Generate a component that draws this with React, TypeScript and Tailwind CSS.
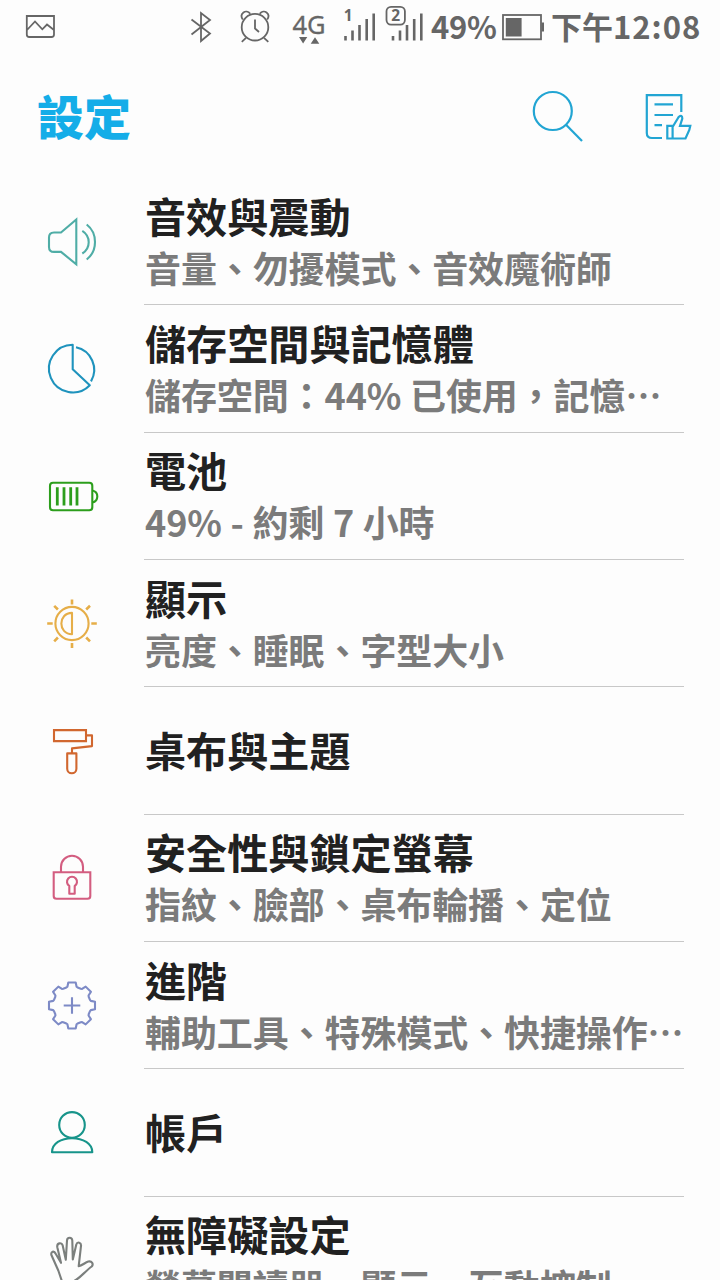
import type { ReactNode } from "react";

interface SettingItem {
  title: string;
  summary?: string;
  color: string;
  icon: ReactNode;
}

// One tooth of the gear, repeated every 45 degrees around (28, 28.5)
const toothPoints = [
  [-5.6, -18],
  [-4.6, -18.8],
  [-3.7, -23],
  [3.7, -23],
  [4.6, -18.8],
  [5.6, -18],
];

const gearPoints = Array.from({ length: 8 })
  .flatMap((_, i) => {
    const angle = (i * Math.PI) / 4;
    return toothPoints.map(([x, y]) => {
      const px = 28 + x * Math.cos(angle) - y * Math.sin(angle);
      const py = 28.5 + x * Math.sin(angle) + y * Math.cos(angle);
      return `${px.toFixed(2)},${py.toFixed(2)}`;
    });
  })
  .join(" ");

const items: SettingItem[] = [
  {
    title: "音效與震動",
    summary: "音量、勿擾模式、音效魔術師",
    color: "text-[#4fada6]",
    icon: (
      <>
        <path d="M10 19.5H17L32.3 6.5V51.2L17 38.9H10Q5 38.9 5 33.9V24.5Q5 19.5 10 19.5Z" strokeLinejoin="miter" />
        <path d="M38.3 17.9Q44.7 22 44.7 29.2T38.3 40.5" />
        <path d="M42.7 11.5Q51 18 51 29T42.7 46.5" />
      </>
    ),
  },
  {
    title: "儲存空間與記憶體",
    summary: "儲存空間：44% 已使用，記憶…",
    color: "text-[#1f93bd]",
    icon: (
      <>
        <path d="M28.7 29.2V4.8A23.8 23.8 0 1 0 45.8 45.2Z" />
        <path d="M32 7.3A23 23 0 0 1 47 41.4" />
      </>
    ),
  },
  {
    title: "電池",
    summary: "49% - 約剩 7 小時",
    color: "text-[#2c9e1c]",
    icon: (
      <>
        <rect x="6" y="14.8" width="42.3" height="27.4" rx="3" />
        <path d="M48.3 22.5Q53.3 23.5 53.3 28.5T48.3 34.5" />
        <path d="M13.3 19.2V37.5M20 19.2V37.5M26.7 19.2V37.5M33 19.2V37.5" strokeWidth="2.8" />
      </>
    ),
  },
  {
    title: "顯示",
    summary: "亮度、睡眠、字型大小",
    color: "text-[#e6ae48]",
    icon: (
      <>
        <circle cx="28" cy="28.5" r="16.6" />
        <path d="M28 17.9V39.2C13.8 39.2 13.8 17.9 28 17.9Z" />
        <path
          d="M28 4.4V9.4M28 47.9V53M3.2 28.5H8.7M47.3 28.5H52.8M10.2 10.8L13.9 14.5M46 10.8L42.2 14.5M10.2 46.3L13.9 42.5M46 46.3L42.2 42.5"
          strokeWidth="2.6"
        />
      </>
    ),
  },
  {
    title: "桌布與主題",
    color: "text-[#d1672f]",
    icon: (
      <>
        <path d="M10 8.1H42V19.1H10Z" strokeLinejoin="miter" />
        <path d="M42 13.4H48V24.1L28 26.4V31.1" />
        <path d="M23.2 31.4H32.4V46.7A4.6 4.6 0 0 1 23.2 46.7Z" />
      </>
    ),
  },
  {
    title: "安全性與鎖定螢幕",
    summary: "指紋、臉部、桌布輪播、定位",
    color: "text-[#d35d80]",
    icon: (
      <>
        <path d="M9.7 22.2H46.3V46Q46.3 48.8 43.5 48.8H12.5Q9.7 48.8 9.7 46Z" strokeLinejoin="miter" />
        <path d="M17 22V16.8A11 11 0 0 1 39 16.8V22" />
        <path d="M25.3 43.8V36A5 5 0 1 1 30.7 36V43.8Z" />
      </>
    ),
  },
  {
    title: "進階",
    summary: "輔助工具、特殊模式、快捷操作…",
    color: "text-[#7d8ac6]",
    icon: (
      <>
        <polygon points={gearPoints} />
        <path d="M28 20.2V36.8M19.7 28.5H36.3" />
      </>
    ),
  },
  {
    title: "帳戶",
    color: "text-[#17948a]",
    icon: (
      <>
        <circle cx="28" cy="20.9" r="12.8" />
        <path d="M8 48.2C8 39.5 17 34.2 28 34.2S48.3 39.5 48.3 48.2Z" />
      </>
    ),
  },
  {
    title: "無障礙設定",
    summary: "螢幕閱讀器、顯示、互動控制",
    color: "text-[#7b7f7d]",
    icon: (
      <path d="M17.7 48.5L14.3 38.5L7.4 23C6.6 19.6 10 18 11.7 21.8L17 30.8L13.3 15.2C12.6 11 17.8 9.8 18.7 13.5L21.8 27.8L23 8.5C23.2 4.8 28 4.8 28.3 8.5L28.8 27.5L32.3 12.5C33.4 9.2 37.4 10.4 37 13.8L34.7 34.2C38 33.8 41 30.5 44.3 29.5C48 28.8 49.8 32.2 47.7 34.5C42 38.5 35.5 46.5 30.5 48.8V56H20Z" />
    ),
  },
];

function StatusBar() {
  return (
    <div className="flex h-[54px] items-center pl-[24px] text-[#666666]">
      <svg className="h-[54px] w-[34px]" viewBox="24 0 34 54" fill="none" stroke="currentColor" strokeWidth="1.8">
        <path d="M26.8 16H54V34.5Q54 37 51.5 37H29.3Q26.8 37 26.8 34.5ZM27 30L35 21.5L42.3 29.3L47 24.5L54 30" />
      </svg>
      <svg
        className="ml-[128px] h-[54px] w-[146px]"
        viewBox="186 0 146 54"
        fill="none"
        stroke="currentColor"
        strokeWidth="1.8"
      >
        <path d="M191.5 19.5L210 33.5L201 41V13L210 20L191.5 34.5" />
        <circle cx="255" cy="27.2" r="13.3" />
        <path d="M255 19.5V28.5L259 32M246 37.8L241.8 41.8M264 37.8L268.3 41.8" />
        <path d="M242.8 19.5C238.8 13.5 246 8.5 250.3 13.8M267.2 19.5C271.2 13.5 264 8.5 259.7 13.8" />
        <text
          x="292.5"
          y="33.6"
          fontSize="25.5"
          fontFamily="Noto Sans, sans-serif"
          fill="currentColor"
          strokeWidth="0.3"
        >
          4G
        </text>
        <path d="M299 37H307.3L303.1 43.5ZM310.7 43.8H319.3L315 37.3Z" fill="currentColor" stroke="none" />
      </svg>
      <svg className="ml-[10px] h-[54px] w-[84px]" viewBox="342 0 84 54" fill="none" stroke="currentColor">
        <path
          d="M345.5 36V40.5M352.5 30.5V40.5M359.5 25V40.5M366.7 19V40.5M373.7 13.5V40.5"
          strokeWidth="2.6"
        />
        <path d="M393 36V40.5M400 30.5V40.5M407 25V40.5M414.2 19V40.5M421.3 13.5V40.5" strokeWidth="2.6" />
        <rect x="386.5" y="6.8" width="18.4" height="17.8" rx="4.5" strokeWidth="1.8" />
        <g fontSize="15.5" fontWeight="700" fontFamily="Noto Sans, sans-serif" fill="currentColor" stroke="none">
          <text x="343.8" y="21">1</text>
          <text x="391.2" y="21.3">2</text>
        </g>
      </svg>
      <span className="ml-[5px] w-[71px] pb-[2px] text-[31px] leading-[52px] font-bold tracking-[-0.3px]">49%</span>
      <svg className="h-[54px] w-[44px]" viewBox="502 0 44 54" fill="none" stroke="currentColor" strokeWidth="1.8">
        <rect x="503" y="15" width="38" height="24.3" />
        <path d="M505.8 18H521.6V36.5H505.8ZM541.5 22.5H544V31.5H541.5Z" fill="currentColor" stroke="none" />
      </svg>
      <span className="ml-[5px] flex pb-[2px] text-[31px] leading-[52px] font-bold whitespace-nowrap">
        下午<span className="tracking-[1px]">12:08</span>
      </span>
    </div>
  );
}

function Header() {
  return (
    <header className="flex h-[124px] items-center pt-[2px] pl-[37px] text-[#22a5d3]">
      <h1 className="pb-[4px] text-[47px] leading-[56px] font-black text-[#14ade8]">設定</h1>
      <svg
        className="ml-[399px] h-[60px] w-[60px]"
        viewBox="530 87 60 60"
        fill="none"
        stroke="currentColor"
        strokeWidth="2.2"
      >
        <circle cx="552.8" cy="111" r="19" />
        <path d="M566 124.8L582 141" />
      </svg>
      <svg
        className="ml-[50px] h-[60px] w-[60px]"
        viewBox="640 87 60 60"
        fill="none"
        stroke="currentColor"
        strokeWidth="2.2"
      >
        <path d="M662 138H652Q646.8 138 646.8 133V95.2H681.3V112M654.5 104.3H673M654.5 115H673M654.5 125.2H662" />
        <path d="M667.3 125.8H672.6V138.5H667.3ZM672.6 127L678.8 116.8Q682.3 114.5 682.3 118.5L680 125.8H690.3L689.3 130L685.5 138.5H672.6" />
      </svg>
    </header>
  );
}

function SettingRow({ title, summary, color, icon }: SettingItem) {
  return (
    <li className="flex h-[127.33px] items-stretch pr-[36px] pl-[44px]">
      <div className={`flex w-[100px] items-center pb-[1.4px] ${color}`}>
        <svg
          className="size-[56px]"
          viewBox="0 0 56 56"
          fill="none"
          stroke="currentColor"
          strokeWidth="2.1"
          strokeLinejoin="round"
        >
          {icon}
        </svg>
      </div>
      <div
        className={`flex w-[540px] flex-col justify-center border-b border-[#c8c8c8] pl-px whitespace-nowrap ${summary ? "pb-px" : "pb-[2px]"}`}
      >
        <h2 className="text-[41.1px] leading-[52px] font-bold text-[#212121]">{title}</h2>
        {summary && (
          <p className="text-[36px] leading-[52px] font-bold tracking-[-0.1px] [word-spacing:0.6px] text-[#7b7b7b]">
            {summary}
          </p>
        )}
      </div>
    </li>
  );
}

export default function App() {
  return (
    <div
      lang="zh-Hant"
      className="h-[1280px] w-[720px] overflow-hidden bg-[#fdfdfd] font-['Noto_Sans_CJK_TC',sans-serif]"
    >
      <StatusBar />
      <Header />
      <ul>
        {items.map((item) => (
          <SettingRow key={item.title} {...item} />
        ))}
      </ul>
    </div>
  );
}
